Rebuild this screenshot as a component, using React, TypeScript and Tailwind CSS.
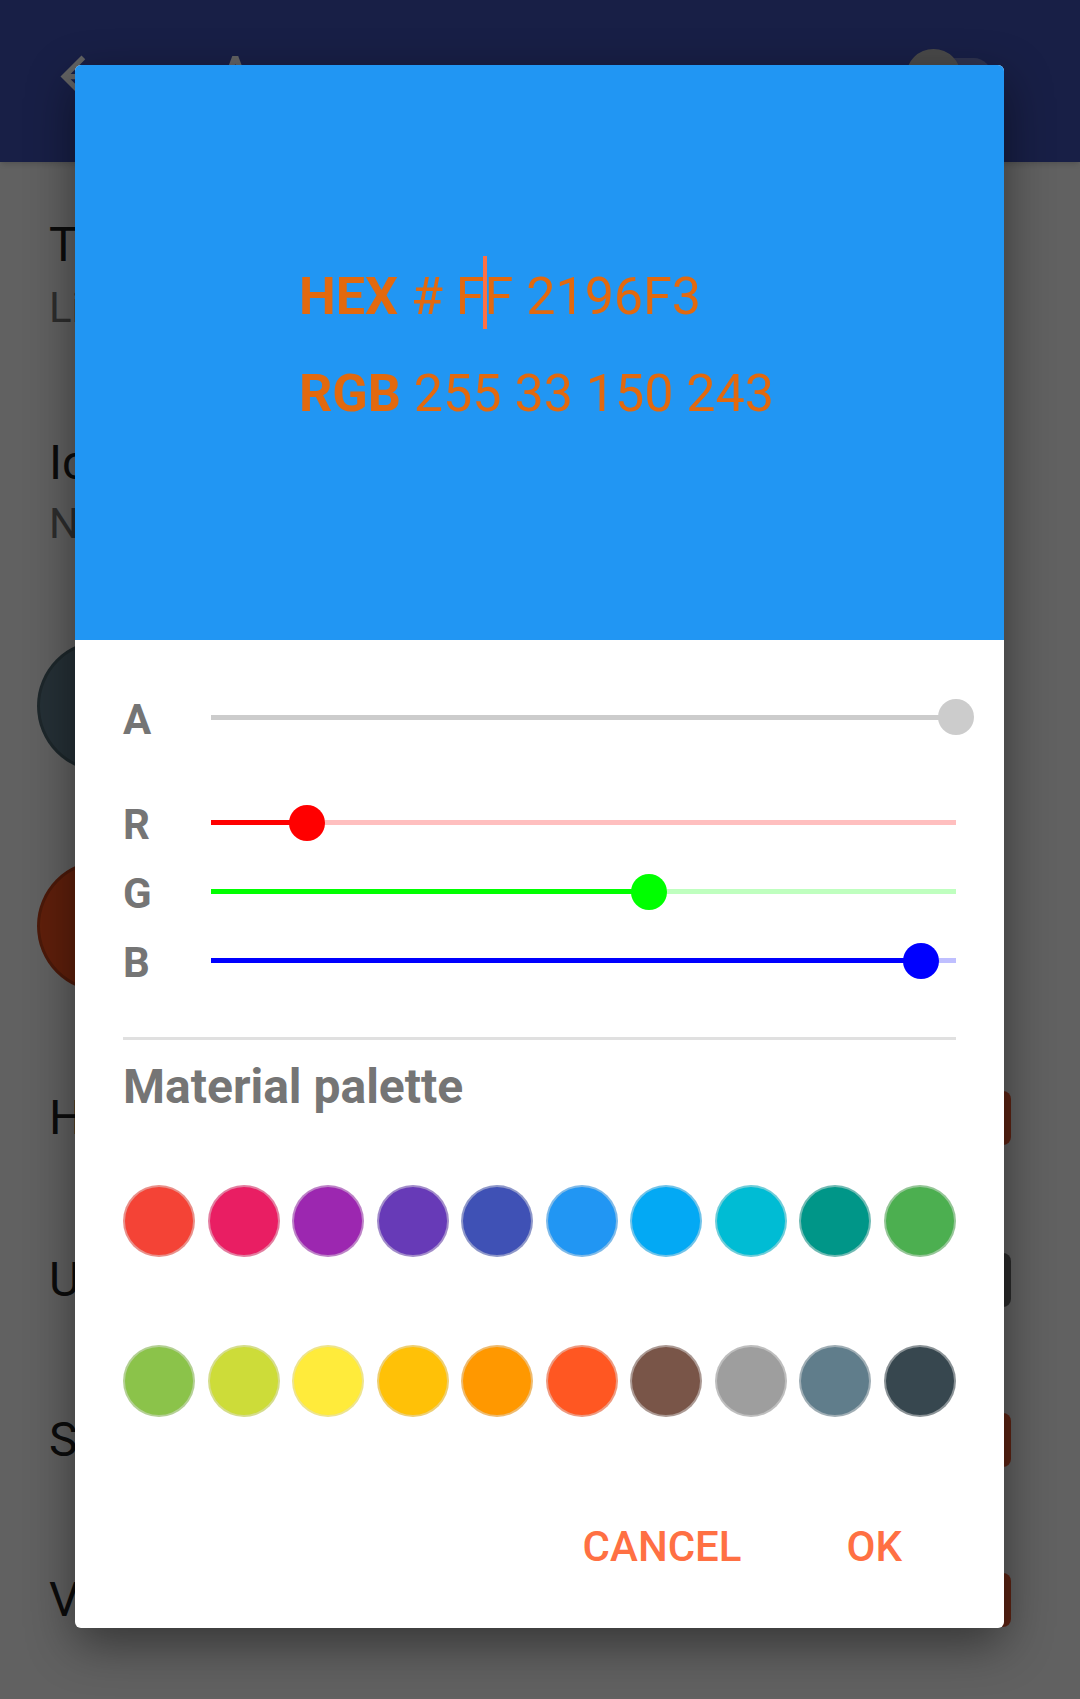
import React from 'react';

const paletteTop = ['#F44336', '#E91E63', '#9C27B0', '#673AB7', '#3F51B5', '#2196F3', '#03A9F4', '#00BCD4', '#009688', '#4CAF50'];
const paletteBottom = ['#8BC34A', '#CDDC39', '#FFEB3B', '#FFC107', '#FF9800', '#FF5722', '#795548', '#9E9E9E', '#607D8B', '#37474F'];

type SliderProps = {
  label: string;
  value: number;
  fill: string;
  rest: string;
  thumb: string;
};

function SliderRow({ label, value, fill, rest, thumb }: SliderProps) {
  const pct = value / 255;
  return (
    <div className="flex items-center h-[69px]">
      <span className="w-[88px] mt-[5px] text-[42px] font-bold leading-[50px] text-[#757575]">{label}</span>
      <div className="relative w-[745px] h-[5px]" style={{ backgroundColor: rest }}>
        <div className="absolute left-0 top-0 h-full" style={{ width: `${pct * 100}%`, backgroundColor: fill }} />
        <div
          className="absolute top-1/2 -translate-y-1/2 w-[36px] h-[36px] rounded-full"
          style={{ left: `${pct * 745 - 18}px`, backgroundColor: thumb }}
        />
      </div>
    </div>
  );
}

function Swatch({ color }: { color: string }) {
  return (
    <div
      className="w-[72px] h-[72px] rounded-full border-2 border-[#dddddd]/50"
      style={{ backgroundColor: color }}
    />
  );
}

export default function App() {
  return (
    <div className="relative w-[1080px] h-[1699px] overflow-hidden bg-[#fafafa] font-['Roboto',sans-serif]">
      {/* settings screen behind the dialog */}
      <div className="h-[162px] bg-[#3F51B5] shadow-md">
        <div className="flex items-center h-[152px] pl-[50px] pr-[88px]">
          <svg viewBox="0 0 24 24" className="w-[63px] h-[63px] fill-white">
            <path d="M20 11H7.83l5.59-5.59L12 4l-8 8 8 8 1.41-1.41L7.83 13H20v-2z" />
          </svg>
          <span className="ml-[105px] text-[52px] leading-[60px] font-medium text-white">Appearance</span>
          <div className="relative ml-auto flex items-center w-[86px] h-[55px]">
            <div className="ml-[4px] w-[82px] h-[37px] rounded-full bg-white/30" />
            <div className="absolute left-0 top-0 w-[55px] h-[55px] rounded-full bg-[#bdbdbd] shadow" />
          </div>
        </div>
      </div>

      <div className="flex flex-col pl-[49px] pr-[69px]">
        <div className="mt-[55px] text-[48px] leading-[56px] text-[#212121]">Theme</div>
        <div className="mt-[10px] text-[42px] leading-[50px] text-[#757575]">Light</div>
        <div className="mt-[102px] text-[48px] leading-[56px] text-[#212121]">Icon</div>
        <div className="mt-[8px] text-[42px] leading-[50px] text-[#757575]">None</div>
        <div className="mt-[91px] -ml-[12px] w-[132px] h-[132px] rounded-full bg-[#607D8B] border-[3px] border-black/20" />
        <div className="mt-[88px] -ml-[12px] w-[132px] h-[132px] rounded-full bg-[#F4511E] border-[3px] border-black/20" />

        <div className="mt-[98px] flex items-center justify-between h-[56px]">
          <span className="text-[48px] leading-[56px] text-[#212121]">Header</span>
          <div className="w-[220px] h-[54px] rounded-[8px] bg-[#EE5A32]" />
        </div>
        <div className="mt-[106px] flex items-center justify-between h-[56px]">
          <span className="text-[48px] leading-[56px] text-[#212121]">Unit</span>
          <div className="w-[220px] h-[54px] rounded-[8px] bg-[#6e6e6e]" />
        </div>
        <div className="mt-[104px] flex items-center justify-between h-[56px]">
          <span className="text-[48px] leading-[56px] text-[#212121]">Status</span>
          <div className="w-[220px] h-[54px] rounded-[8px] bg-[#EE5A32]" />
        </div>
        <div className="mt-[104px] flex items-center justify-between h-[56px]">
          <span className="text-[48px] leading-[56px] text-[#212121]">View</span>
          <div className="w-[220px] h-[54px] rounded-[8px] bg-[#EE5A32]" />
        </div>
      </div>

      {/* scrim */}
      <div className="absolute inset-0 bg-black/[0.61]" />

      {/* color picker dialog */}
      <div className="absolute left-[75px] top-[65px] w-[929px] rounded-[6px] overflow-hidden bg-white shadow-[0_16px_48px_rgba(0,0,0,0.45)]">
        <div className="h-[575px] bg-[#2196F3] pl-[224px] pt-[183px] text-[52px] leading-[97px] text-[#E2690E]">
          <div className="whitespace-nowrap">
            <span className="font-bold">HEX</span> # F
            <span className="inline-block w-[4px] h-[73px] -mx-[2px] align-[-15px] bg-[#FF7043]" />
            F 2196F3
          </div>
          <div className="whitespace-nowrap">
            <span className="font-bold">RGB</span> 255 33 150 243
          </div>
        </div>

        <div className="px-[48px] pt-[42px]">
          <div className="flex items-center h-[70px]">
            <span className="w-[88px] mt-[5px] text-[42px] font-bold leading-[50px] text-[#757575]">A</span>
            <div className="relative w-[745px] h-[5px] bg-[#cccccc]">
              <div className="absolute top-1/2 -translate-y-1/2 left-[727px] w-[36px] h-[36px] rounded-full bg-[#cccccc]" />
            </div>
          </div>

          <div className="mt-[36px]">
            <SliderRow label="R" value={33} fill="#ff0000" rest="#ffbfbf" thumb="#ff0000" />
            <SliderRow label="G" value={150} fill="#00ff00" rest="#bfffbf" thumb="#00ff00" />
            <SliderRow label="B" value={243} fill="#0000ff" rest="#bfbfff" thumb="#0000ff" />
          </div>

          <div className="mt-[42px] h-[3px] bg-[#e0e0e0]" />

          <div className="mt-[18px] text-[48px] font-bold leading-[58px] text-[#757575]">Material palette</div>

          <div className="mt-[69px] flex justify-between">
            {paletteTop.map((c) => (
              <Swatch key={c} color={c} />
            ))}
          </div>
          <div className="mt-[88px] flex justify-between">
            {paletteBottom.map((c) => (
              <Swatch key={c} color={c} />
            ))}
          </div>
        </div>

        <div className="mt-[105px] pb-[56px] pr-[102px] flex justify-end gap-[105px] text-[42px] font-medium leading-[50px] text-[#FF7043]">
          <span>CANCEL</span>
          <span>OK</span>
        </div>
      </div>
    </div>
  );
}
